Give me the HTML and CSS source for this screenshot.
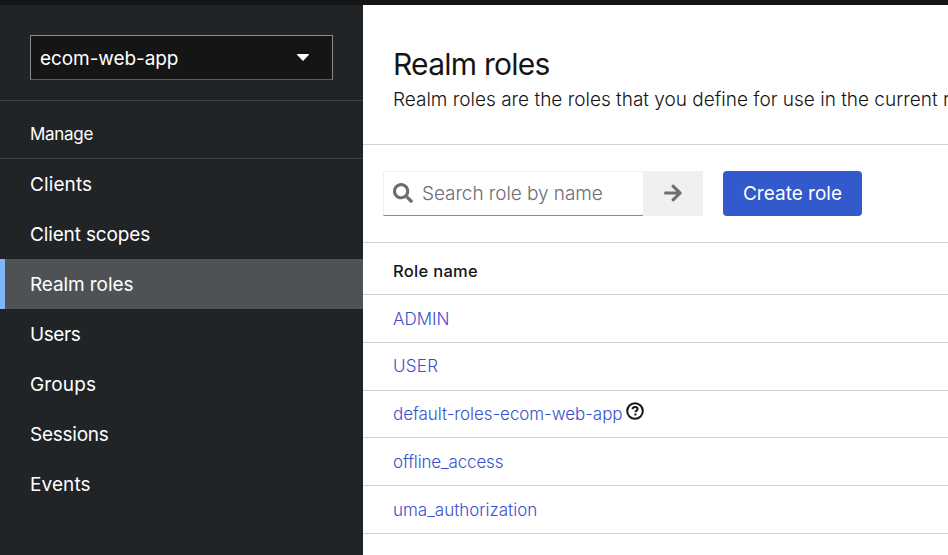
FILE: index.html
```html
<!DOCTYPE html>
<html lang="en">
<head>
<meta charset="utf-8">
<title>Realm roles</title>
<link rel="stylesheet" href="styles.css">
</head>
<body>
<header class="masthead"></header>
<div class="page">
  <aside class="sidebar">
    <div class="realm">
      <button class="realm-select"><span class="realm-name">ecom-web-app</span>
        <svg class="caret" viewBox="0 0 12 7"><path d="M.7 0h10.6c.6 0 .9.7.5 1.1L6.5 6.600a.7.7 0 0 1-1 0L.2 1.100C-.2.7.1 0 .7 0z"/></svg>
      </button>
    </div>
    <h2 class="nav-title"><span class="t-manage">Manage</span></h2>
    <nav class="nav">
      <a class="nav-link t-clients">Clients</a>
      <a class="nav-link t-scopes">Client scopes</a>
      <a class="nav-link current t-realm">Realm roles</a>
      <a class="nav-link t-users">Users</a>
      <a class="nav-link t-groups">Groups</a>
      <a class="nav-link t-sessions">Sessions</a>
      <a class="nav-link t-events">Events</a>
    </nav>
  </aside>
  <main class="main">
    <section class="heading">
      <h1 class="title">Realm roles</h1>
      <p class="description">Realm roles are the roles that you define for use in the current realm.</p>
    </section>
    <section class="toolbar">
      <div class="search">
        <svg class="search-icon" viewBox="0 0 512 512"><path d="M505 442.700 405.300 343c-4.500-4.500-10.600-7-17-7H372c27.600-35.300 44-79.700 44-128C416 93.100 322.900 0 208 0S0 93.100 0 208s93.100 208 208 208c48.300 0 92.700-16.400 128-44v16.300c0 6.400 2.500 12.500 7 17l99.700 99.700c9.400 9.400 24.600 9.400 33.900 0l28.300-28.300c9.400-9.400 9.400-24.600.1-34zM208 336c-70.700 0-128-57.200-128-128 0-70.700 57.200-128 128-128 70.700 0 128 57.200 128 128 0 70.700-57.200 128-128 128z"/></svg>
        <span class="placeholder">Search role by name</span>
      </div>
      <button class="submit"><svg class="arrow" viewBox="0 0 448 512"><path d="M190.500 66.900l22.200-22.200c9.400-9.400 24.600-9.400 33.900 0L441 239c9.400 9.400 9.400 24.600 0 33.900L246.600 467.300c-9.400 9.400-24.600 9.400-33.900 0l-22.200-22.200c-9.500-9.500-9.300-25 .4-34.300L311.400 296H24c-13.300 0-24-10.700-24-24v-32c0-13.300 10.700-24 24-24h287.400L190.900 101.200c-9.800-9.300-10-24.800-.4-34.300z"/></svg></button>
      <button class="create"><span class="t-create">Create role</span></button>
    </section>
    <div class="table">
      <div class="table-head"><span class="t-head">Role name</span></div>
      <div class="row"><a class="t-admin">ADMIN</a></div>
      <div class="row"><a class="t-user">USER</a></div>
      <div class="row"><a class="t-default">default-roles-ecom-web-app</a>
        <svg class="help" viewBox="0 0 18 18"><circle cx="9" cy="9" r="7.800"/><path d="M6.500 7.200C6.700 5.700 7.700 5 9.100 5c1.500 0 2.500.8 2.500 2 0 1.600-2.100 1.700-2.100 3.200"/><path d="M9.400 11.500v2"/></svg>
      </div>
      <div class="row"><a class="t-offline">offline_access</a></div>
      <div class="row"><a class="t-uma">uma_authorization</a></div>
    </div>
  </main>
</div>
</body>
</html>
```
FILE: styles.css
```css
* { box-sizing: border-box; }
body { margin: 0; height: 555px; overflow: hidden; background: #fff; color: #151515; font-family: Inter, "Liberation Sans", sans-serif; font-size: 19px; }
h1, h2, p { margin: 0; font-weight: 400; }
button { border: 0; margin: 0; padding: 0; font: inherit; }
a, span, h1, p { white-space: nowrap; }
.masthead { height: 5px; background: #151515; }
.page { display: flex; height: 550px; }
.sidebar { flex: 0 0 363px; background: #212427; color: #fff; }
.realm { height: 96px; padding: 30px 30px 0; border-bottom: 1px solid #3c3f42; }
.realm-select { display: flex; align-items: center; justify-content: space-between; width: 303px; height: 45px; padding: 0 23px 0 9px; border: 1px solid #8a8d90; border-bottom-color: #325acd; background: #151515; color: #fff; }
.realm-name { padding-top: 2px; letter-spacing: -.08px; }
.caret { width: 12px; height: 7px; fill: #fff; }
.nav-title { height: 58px; padding: 22px 30px 0; border-bottom: 1px solid #3c3f42; font-size: 17px; line-height: 22px; letter-spacing: -.3px; }
.nav-link { display: block; height: 50px; padding-left: 30px; line-height: 52px; }
.t-clients { letter-spacing: .1px; }
.t-scopes { letter-spacing: -.15px; }
.t-realm { letter-spacing: -.1px; }
.t-users { letter-spacing: -.4px; }
.t-groups { letter-spacing: .15px; }
.t-sessions { letter-spacing: -.25px; }
.t-events { letter-spacing: .1px; }
.current { background: #4f5255; border-left: 5px solid #7fb5f8; padding-left: 25px; }
.main { flex: 1; min-width: 0; overflow: hidden; }
.heading { height: 140px; padding: 39px 30px 0; border-bottom: 1px solid #d2d2d2; }
.title { font-size: 30px; line-height: 40px; letter-spacing: -.75px; }
.description { padding-top: 1px; font-size: 19px; line-height: 30px; font-weight: 300; }
.toolbar { display: flex; height: 98px; padding: 26px 20px 0; border-bottom: 1px solid #d2d2d2; }
.search { display: flex; align-items: center; width: 260px; height: 45px; padding-left: 9px; border: 1px solid #f0f0f0; border-right: 0; border-bottom-color: #8a8d90; color: #6a6e73; font-weight: 300; }
.search-icon { width: 20px; height: 20px; margin: -1px 9px 0 0; fill: #6a6e73; }
.placeholder { letter-spacing: -.07px; }
.submit { display: flex; align-items: center; justify-content: center; width: 60px; height: 45px; padding-bottom: 1px; background: #f0f0f0; }
.arrow { width: 18px; height: 20px; fill: #6a6e73; }
.create { width: 139px; height: 45px; margin-left: 20px; border-radius: 4px; background: #325acd; color: #fff; }
.table { font-size: 17px; }
.table-head { height: 52px; padding: 3px 30px 0; border-bottom: 1px solid #d2d2d2; line-height: 50px; font-size: 16.500px; font-weight: 500; letter-spacing: .3px; }
.row { display: flex; align-items: center; height: 47.800px; padding: 0 30px; border-bottom: 1px solid #d2d2d2; color: #3a50cd; font-weight: 300; }
.t-admin { padding-top: 1px; }
.t-user { letter-spacing: .3px; }
.t-default { letter-spacing: -.06px; }
.t-offline { letter-spacing: -.15px; }
.help { width: 18px; height: 18px; margin: -5px 0 0 4px; fill: none; stroke: #151515; stroke-width: 2; }
```
